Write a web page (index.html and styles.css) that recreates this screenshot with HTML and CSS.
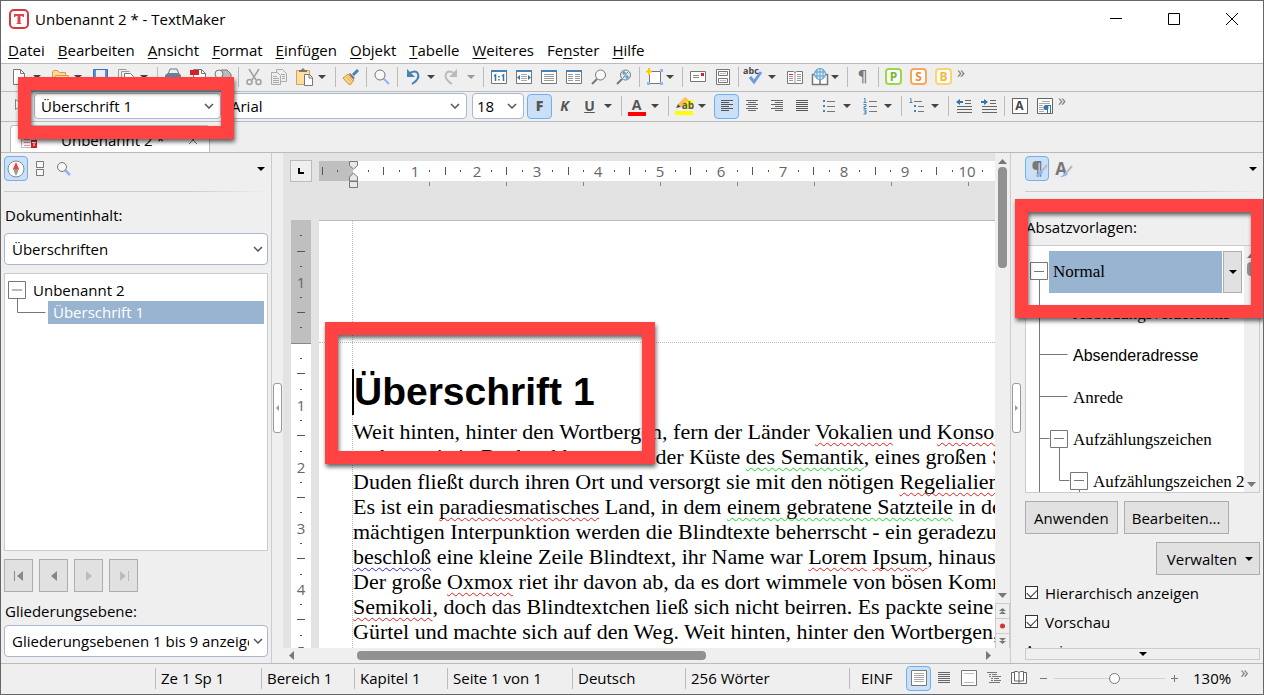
FILE: index.html
```html
<!DOCTYPE html>
<html lang="de">
<head>
  <meta charset="UTF-8">
  <meta name="viewport" content="width=device-width, initial-scale=1.0">
  <title>Unbenannt 2 * - TextMaker</title>
  <link rel="stylesheet" href="styles.css">
</head>
<body>
<header class="titlebar">
  <svg class="logo" width="20" height="20" viewBox="0 0 20 20"><rect x="1" y="1" width="18" height="18" rx="4" fill="#fff" stroke="#d9363e" stroke-width="2"/><path d="M5 5h10v3h-1l-1-1h-1.500v7l1.500 1h-6l1.500-1v-7h-1.500l-1 1h-1z" fill="#e0454c"/></svg>
  <span class="titlebar__name">Unbenannt 2 * - TextMaker</span>
  <button class="window-btn" aria-label="Minimieren"><svg width="14" height="14"><path d="M1 6.500h12" stroke="#000"/></svg></button>
  <button class="window-btn" aria-label="Maximieren"><svg width="14" height="14"><path d="M1.500 1.500h11v11h-11z" fill="none" stroke="#000"/></svg></button>
  <button class="window-btn" aria-label="Schließen"><svg width="14" height="14"><path d="M1 1l12 12M13 1l-12 12" stroke="#000"/></svg></button>
</header>

<nav class="menu">
  <a href="#"><u>D</u>atei</a>
  <a href="#"><u>B</u>earbeiten</a>
  <a href="#"><u>A</u>nsicht</a>
  <a href="#"><u>F</u>ormat</a>
  <a href="#"><u>E</u>infügen</a>
  <a href="#"><u>O</u>bjekt</a>
  <a href="#"><u>T</u>abelle</a>
  <a href="#"><u>W</u>eiteres</a>
  <a href="#">Fe<u>n</u>ster</a>
  <a href="#"><u>H</u>ilfe</a>
</nav>

<div class="toolbar toolbar--main">
  <button class="tool" aria-label="Neu"><svg width="18" height="18"><path d="M3.500 1.500h7l4 4v11h-11z" fill="#fff" stroke="#777"/><path d="M10.500 1.500v4h4" fill="none" stroke="#777"/></svg></button>
  <button class="drop" aria-label="Neu Optionen"></button>
  <button class="tool" aria-label="Öffnen"><svg width="18" height="18"><path d="M1.500 15.500v-12l1-1h4l2 2h6v3" fill="#fbd79a" stroke="#d79d47"/><path d="M1.500 15.500l3-8h13l-3 8z" fill="#ffe0ac" stroke="#d79d47"/></svg></button>
  <button class="drop" aria-label="Öffnen Optionen"></button>
  <button class="tool" aria-label="Speichern"><svg width="18" height="18"><path d="M1.500 1.500h14v15h-14z" fill="#5b8fd8" stroke="#3c6fb5"/><path d="M4 2h9v7h-9zM5 12h7v4h-7z" fill="#eee"/></svg></button>
  <button class="tool" aria-label="Alles speichern"><svg width="18" height="18"><path d="M1.500 12.500v-11h8M4.500 14.500v-11h8" fill="none" stroke="#999"/><path d="M7.500 5.500h6l3 3v8h-9z" fill="#fff" stroke="#777"/><path d="M10 10h5v4h-5z" fill="#4682b4"/></svg></button>
  <button class="drop" aria-label="Speichern Optionen"></button>
  <span class="sep"></span>
  <button class="tool" aria-label="Drucken"><svg width="18" height="18"><path d="M4 6l2-5h7l2 5z" fill="#eee" stroke="#777"/><path d="M1 7l3-2h10l3 2v6h-16z" fill="#6f7f8f"/><path d="M3 7h10v2h-10z" fill="#4e8ab8"/><path d="M13 9h3v2h-3z" fill="#a3d52b"/></svg></button>
  <button class="tool" aria-label="PDF"><svg width="18" height="18"><path d="M4.500 1.500h8l4 4v11h-12z" fill="#fff" stroke="#777"/><path d="M1 2h9v5h-9z" fill="#d5202a"/><path d="M12.500 1.500v4h4" fill="none" stroke="#777"/></svg></button>
  <button class="tool" aria-label="Seitenansicht"><svg width="18" height="18"><path d="M7 2h6l4 4v8h-9z" fill="#bbb" stroke="#777"/><circle cx="5" cy="6" r="4" fill="#eee" stroke="#777"/><path d="M14 9h3v3h-3z" fill="#a3d52b"/></svg></button>
  <span class="sep"></span>
  <button class="tool" aria-label="Ausschneiden"><svg width="18" height="18" fill="none" stroke="#a0a0a0" stroke-width="1.500"><path d="M4 1l7 11M14 1l-7 11"/><circle cx="4.500" cy="14" r="2.500"/><circle cx="13.500" cy="14" r="2.500"/></svg></button>
  <button class="tool" aria-label="Kopieren"><svg width="18" height="18" fill="#eee" stroke="#aaa"><path d="M6.500 1.500h6l4 4v8h-10z"/><path d="M1.500 4.500h6l3 3v9h-9zM3 8.500h4M3 10.500h6M3 12.500h6M3 14.500h6M11 6.500h4M12 8.500h3M12 10.500h3"/></svg></button>
  <button class="tool" aria-label="Einfügen"><svg width="18" height="18"><path d="M1.500 2.500h13v14h-13z" fill="#ffdfa0" stroke="#d7a052"/><path d="M4 4h8v-2h-2l-2-2-2 2h-2z" fill="#777"/><path d="M9.500 6.500h5l3 3v8h-8z" fill="#fff" stroke="#777"/><path d="M14 7v3h3" fill="none" stroke="#777"/></svg></button>
  <button class="drop" aria-label="Einfügen Optionen"></button>
  <span class="sep"></span>
  <button class="tool" aria-label="Format übertragen"><svg width="18" height="18"><path d="M16 2l-5 5" stroke="#4682b4" stroke-width="3"/><path d="M8 5l5 5-2 1-4-5z" fill="#777"/><path d="M6 6l6 6-4 5q-4-3-7-7z" fill="#ffd28a" stroke="#c89043"/><path d="M4 9l5 5M6 8l5 5" stroke="#e0b060"/></svg></button>
  <span class="sep"></span>
  <button class="tool" aria-label="Suchen"><svg width="18" height="18"><path d="M10 10l6 6" stroke="#8fb3ff" stroke-width="2"/><circle cx="7" cy="7" r="5" fill="#f8f8f8" stroke="#777"/></svg></button>
  <span class="sep"></span>
  <button class="tool" aria-label="Rückgängig"><svg width="18" height="18"><path d="M4 6q8-5 10 0t-6 10" fill="none" stroke="#4682b4" stroke-width="2"/><path d="M3 1v8h8z" fill="#4682b4"/></svg></button>
  <button class="drop drop--narrow" aria-label="Rückgängig Liste"></button>
  <button class="tool" aria-label="Wiederherstellen"><svg width="18" height="18"><path d="M12 6q-8-5-10 0t6 10" fill="none" stroke="#bbb" stroke-width="2"/><path d="M13 1v8h-8z" fill="#bbb"/></svg></button>
  <button class="drop drop--narrow drop--off" aria-label="Wiederherstellen Liste"></button>
  <span class="sep"></span>
  <button class="tool" aria-label="Originalgröße"><svg width="18" height="18"><path d="M1.500 2.500h15v13h-15z" fill="#fff" stroke="#777"/><path d="M1 2h16v2h-16z" fill="#4682b4"/><path d="M4 8l1.500-1v6M12 8l1.500-1v6M9 8v1.500M9 11v1.500" fill="none" stroke="#2f75ab" stroke-width="1.500"/></svg></button>
  <button class="tool" aria-label="Seitenbreite"><svg width="18" height="18"><path d="M1.500 2.500h15v13h-15z" fill="#fff" stroke="#777"/><path d="M1 2h16v2h-16z" fill="#4682b4"/><path d="M6 6.500h6M6 8.500h6M6 10.500h6M6 12.500h6" stroke="#aaa"/><path d="M5 7v5l-3-2.500zM13 7v5l3-2.500z" fill="#2f75ab"/></svg></button>
  <button class="tool" aria-label="Ganze Seite"><svg width="18" height="18"><path d="M1.500 2.500h15v13h-15z" fill="#fff" stroke="#777"/><path d="M1 2h16v2h-16z" fill="#4682b4"/><path d="M4 6.500h10M4 8.500h10M4 10.500h10M4 12.500h10" stroke="#999"/></svg></button>
  <button class="tool" aria-label="Zwei Seiten"><svg width="18" height="18"><path d="M1.500 2.500h15v13h-15z" fill="#fff" stroke="#777"/><path d="M1 2h16v2h-16z" fill="#4682b4"/><path d="M3 6.500h5M3 8.500h5M3 10.500h5M3 12.500h5M10 6.500h5M10 8.500h5M10 10.500h5M10 12.500h5" stroke="#999"/></svg></button>
  <button class="tool" aria-label="Lupe"><svg width="18" height="18"><path d="M7 11l-5 5" stroke="#777" stroke-width="2"/><circle cx="10.500" cy="7" r="5" fill="#f8f8f8" stroke="#777"/></svg></button>
  <button class="tool" aria-label="Zoomstufe"><svg width="18" height="18"><path d="M7 11l-5 5" stroke="#777" stroke-width="2"/><circle cx="10.500" cy="7" r="5" fill="#e4f0f8" stroke="#777"/><path d="M8 10l5-6M8 4h2v2h-2zM11 8h2v2h-2z" stroke="#4682b4" fill="none"/></svg></button>
  <span class="sep"></span>
  <button class="tool" aria-label="Rahmen"><svg width="18" height="18"><path d="M3.500 3.500h11v12h-11z" fill="#fff" stroke="#777"/><path d="M1 14h3v3h-3zM14 14h3v3h-3zM14 1h3v3h-3z" fill="#8fb3ff"/><path d="M3 0v7M0 3.500h6" stroke="#fc0" stroke-width="2"/></svg></button>
  <button class="drop drop--near" aria-label="Rahmen Optionen"></button>
  <span class="sep"></span>
  <button class="tool" aria-label="Umschlag"><svg width="18" height="18"><path d="M1.500 3.500h15v10h-15z" fill="#fff" stroke="#777"/><path d="M12 5h3v3h-3z" fill="#d5202a"/><path d="M4 7.500h6M4 9.500h6" stroke="#888"/></svg></button>
  <button class="tool" aria-label="Etiketten"><svg width="18" height="18" fill="#fff" stroke="#777"><path d="M2.500 1.500h13v15h-13z"/><path d="M4.500 3.500h9v4h-9zM4.500 10.500h9v4h-9z"/><path d="M6 5.500h6M6 12.500h6" stroke="#bbb"/></svg></button>
  <span class="sep"></span>
  <button class="tool tool--spell" aria-label="Rechtschreibung"><small>abc</small><svg width="18" height="18"><path d="M5 9l4 5 7-10" fill="none" stroke="#6f9be0" stroke-width="3"/></svg></button>
  <button class="drop" aria-label="Rechtschreibung Optionen"></button>
  <button class="tool" aria-label="Thesaurus"><svg width="18" height="18"><path d="M1.500 3.500h6l1.500 1 1.500-1h6v12h-15z" fill="#fff" stroke="#777"/><path d="M9 4v12M11 6.500h4M3 8.500h4M11 8.500h4M3 10.500h4M11 10.500h4M3 12.500h4M11 12.500h4" stroke="#999"/><path d="M3 6.500h4" stroke="#d5202a"/></svg></button>
  <button class="tool" aria-label="Wörterbuch"><svg width="18" height="18"><path d="M1.500 6.500h15v10h-15zM9 8v9" fill="#fff" stroke="#777" stroke-width="1.500"/><circle cx="9" cy="6" r="5.500" fill="#d9ecf8" stroke="#5f9fcc"/><path d="M4 4h10M4 8h10M9 1v10M6 1v10M12 1v10" stroke="#5f9fcc"/></svg></button>
  <button class="drop drop--near" aria-label="Wörterbuch Optionen"></button>
  <span class="sep"></span>
  <button class="tool tool--pilcrow" aria-label="Steuerzeichen">¶</button>
  <span class="sep"></span>
  <button class="tool"><span class="badge badge--p">P</span></button>
  <button class="tool"><span class="badge badge--s">S</span></button>
  <button class="tool"><span class="badge badge--b">B</span></button>
  <button class="more" aria-label="Mehr">»</button>
</div>

<div class="toolbar toolbar--format">
  <button class="tool" aria-label="Zeiger"><svg width="18" height="18"><path d="M6.500 2.500v10l7-5z" fill="#fff" stroke="#888"/></svg></button>
  <span class="select select--style">
    <select aria-label="Absatzvorlage"><option>Überschrift 1</option></select>
    <svg width="10" height="6"><path d="M1 1l4 4 4-4"/></svg>
  </span>
  <span class="select select--font">
    <select aria-label="Schriftart"><option>Arial</option></select>
    <svg width="10" height="6"><path d="M1 1l4 4 4-4"/></svg>
  </span>
  <span class="select select--size">
    <select aria-label="Schriftgröße"><option>18</option></select>
    <svg width="10" height="6"><path d="M1 1l4 4 4-4"/></svg>
  </span>
  <button class="tool tool--on tool--text"><b>F</b></button>
  <button class="tool tool--text"><i>K</i></button>
  <button class="tool tool--text"><u>U</u></button>
  <button class="drop" aria-label="Unterstreichung"></button>
  <span class="sep"></span>
  <button class="tool tool--text"><span class="font-color">A</span></button>
  <button class="drop" aria-label="Schriftfarbe"></button>
  <span class="sep"></span>
  <button class="tool tool--marker" aria-label="Hervorheben"><svg width="18" height="20"><path d="M8 4h10v9h-10zM0 15h18v4h-18z" fill="#ff0"/><path d="M3 8l7-7 4 3-7 7z" fill="#ffc04d"/><path d="M3 8l3 3-5 1z" fill="#555"/></svg><small>ab</small></button>
  <button class="drop" aria-label="Markierfarbe"></button>
  <div class="align">
    <button class="tool tool--on" aria-label="Linksbündig"><svg width="14" height="14" stroke="#555"><path d="M1 1.500h12M1 3.500h8M1 5.500h12M1 7.500h8M1 9.500h12M1 11.500h8"/></svg></button>
    <button class="tool" aria-label="Zentriert"><svg width="14" height="14" stroke="#666"><path d="M1 1.500h12M3 3.500h8M1 5.500h12M3 7.500h8M1 9.500h12M3 11.500h8"/></svg></button>
    <button class="tool" aria-label="Rechtsbündig"><svg width="14" height="14" stroke="#666"><path d="M1 1.500h12M5 3.500h8M1 5.500h12M5 7.500h8M1 9.500h12M5 11.500h8"/></svg></button>
    <button class="tool" aria-label="Blocksatz"><svg width="14" height="14" stroke="#555"><path d="M1 1.500h12M1 3.500h12M1 5.500h12M1 7.500h12M1 9.500h12M1 11.500h12"/></svg></button>
  </div>
  <button class="tool" aria-label="Aufzählung"><svg width="14" height="16"><path d="M1 2h2v2h-2zM1 7h2v2h-2zM1 12h2v2h-2z" fill="#4682b4"/><path d="M5 3.500h8M5 8.500h8M5 13.500h8" stroke="#777"/></svg></button>
  <button class="drop" aria-label="Aufzählung Optionen"></button>
  <button class="tool" aria-label="Nummerierung"><svg width="14" height="18"><path d="M1 1.500h1v4M.5 5.500h3M.5 7.500h2.500v2h-2v2h2.500M.5 13h2.500v4h-2.500M1 15h2" fill="none" stroke="#4682b4"/><path d="M6 4.500h8M6 9.500h8M6 14.500h8" stroke="#777"/></svg></button>
  <button class="drop" aria-label="Nummerierung Optionen"></button>
  <span class="sep"></span>
  <button class="tool" aria-label="Gliederung"><svg width="16" height="18"><path d="M1 1.500h1v4M.5 5.500h3" fill="none" stroke="#4682b4"/><path d="M5 8h2v2h-2zM5 13h2v2h-2z" fill="#4682b4"/><path d="M5 4.500h8M9 9.500h6M9 14.500h6" stroke="#777"/></svg></button>
  <button class="drop" aria-label="Gliederung Optionen"></button>
  <span class="sep"></span>
  <button class="tool" aria-label="Einzug verkleinern"><svg width="16" height="16"><path d="M9 2.500h6M9 5.500h6M1 8.500h15M1 11.500h15M1 14.500h15" stroke="#666"/><path d="M0 4l4-3v2h3v2h-3v2z" fill="#2f75ab"/></svg></button>
  <button class="tool" aria-label="Einzug vergrößern"><svg width="16" height="16"><path d="M9 2.500h6M9 5.500h6M1 8.500h15M1 11.500h15M1 14.500h15" stroke="#666"/><path d="M7 4l-4-3v2h-3v2h3v2z" fill="#2f75ab"/></svg></button>
  <span class="sep"></span>
  <button class="tool"><span class="boxed">A</span></button>
  <button class="tool" aria-label="Absatz"><svg width="16" height="16"><path d="M.5.5h15v15h-15z" fill="#fff" stroke="#666"/><path d="M5 3.500h8M2 5.500h11M2 7.500h4M2 9.500h4M2 11.500h5M2 13.500h5" stroke="#aaa"/><path d="M14 7.500h-4M10.500 8v7M13.500 8v7" fill="none" stroke="#2f75ab"/><circle cx="9" cy="9.500" r="2.500" fill="#2f75ab"/></svg></button>
  <button class="more" aria-label="Mehr">»</button>
</div>

<div class="tabs">
  <div class="tab">
    <svg width="18" height="18"><path d="M1.500 1.500h10l4 4v11h-14z" fill="#fff" stroke="#bbb"/><path d="M4 8.500h6M4 11.500h6M4 14.500h6" stroke="#d9a0a0"/><path d="M11 9h6v8h-6z" fill="#d5202a"/><path d="M12 11.500h4M14 11v4" stroke="#fff"/></svg>
    <span class="tab__name">Unbenannt 2 *</span>
    <button class="tab__close" aria-label="Tab schließen"><svg width="10" height="10"><path d="M1 1l8 8M9 1l-8 8" stroke="#777"/></svg></button>
  </div>
</div>

<main class="work">
  <aside class="panel panel--left">
    <div class="panel__tools">
      <button class="tool tool--on" aria-label="Navigator"><svg width="20" height="20"><circle cx="10" cy="10" r="8" fill="#fff" stroke="#888"/><path d="M10 3l3 7h-6z" fill="#f04040"/><path d="M10 17l3-7h-6z" fill="#999"/></svg></button>
      <button class="tool" aria-label="Seiten"><svg width="10" height="18" fill="#f8f8f8" stroke="#777"><path d="M1.500 1.500h7v6h-7zM1.500 9.500h7v6h-7z"/></svg></button>
      <button class="tool" aria-label="Suche"><svg width="16" height="16"><path d="M9 9l5 5" stroke="#8fb3ff" stroke-width="2.500"/><circle cx="6" cy="6" r="4.500" fill="#f8f8f8" stroke="#777"/></svg></button>
      <button class="drop drop--panel" aria-label="Optionen"></button>
    </div>
    <label class="panel__label" for="content">Dokumentinhalt:</label>
    <span class="select select--tall">
      <select id="content"><option>Überschriften</option></select>
      <svg width="10" height="6"><path d="M1 1l4 4 4-4"/></svg>
    </span>
    <ul class="outline">
      <li><svg width="20" height="24"><path d="M.5 3.500h17v17h-17z" fill="#fff" stroke="#777"/><path d="M4 12h10M9.500 21v3" stroke="#777"/></svg><span>Unbenannt 2</span></li>
      <li class="outline__child"><svg width="38" height="24"><path d="M9.500 0v11.500h28" fill="none" stroke="#777"/></svg><span class="selected">Überschrift 1</span></li>
    </ul>
    <div class="steps">
      <button aria-label="Anfang"><svg width="12" height="12"><path d="M1.500 1v10" stroke="#888"/><path d="M10 1v10l-6-5z" fill="#888"/></svg></button>
      <button aria-label="Zurück"><svg width="12" height="12"><path d="M9 1v10l-6-5z" fill="#888"/></svg></button>
      <button aria-label="Weiter" disabled><svg width="12" height="12"><path d="M3 1v10l6-5z" fill="#bbb"/></svg></button>
      <button aria-label="Ende" disabled><svg width="12" height="12"><path d="M10.500 1v10" stroke="#bbb"/><path d="M2 1v10l6-5z" fill="#bbb"/></svg></button>
    </div>
    <label class="panel__label panel__label--level" for="level">Gliederungsebene:</label>
    <span class="select select--tall">
      <select id="level"><option>Gliederungsebenen 1 bis 9 anzeigen</option></select>
      <svg width="10" height="6"><path d="M1 1l4 4 4-4"/></svg>
    </span>
  </aside>

  <div class="splitter splitter--left"><button aria-label="Leiste einklappen"><svg width="5" height="8"><path d="M4 1v6l-3-3z" fill="#999"/></svg></button></div>

  <section class="editor">
    <div class="corner"><button aria-label="Tabulator"><svg width="8" height="8"><path d="M2 1v5h5" fill="none" stroke="#000" stroke-width="2"/></svg></button></div>
    <div class="ruler-x">
      <svg width="100%" height="28">
        <rect width="100%" height="20" fill="#fff"/>
        <rect width="34" height="20" fill="#bfbfbf"/>
        <path d="M3.500 6v8M64.500 6v8M126.500 6v8M187.500 6v8M249.500 6v8M310.500 6v8M371.500 6v8M433.500 6v8M494.500 6v8M556.500 6v8M617.500 6v8M18.500 9v2M49.500 9v2M80.500 9v2M110.500 9v2M141.500 9v2M172.500 9v2M203.500 9v2M233.500 9v2M264.500 9v2M295.500 9v2M326.500 9v2M356.500 9v2M387.500 9v2M418.500 9v2M449.500 9v2M479.500 9v2M510.500 9v2M540.500 9v2M571.500 9v2M602.500 9v2M633.500 9v2M663.500 9v2" stroke="#555"/>
        <path d="M110.500 21v4M187.500 21v4M264.500 21v4M341.500 21v4M418.500 21v4M495.500 21v4M572.500 21v4M649.500 21v4" stroke="#888"/>
        <path d="M30.500.5h8v4l-4 3.500-4-3.500zM34.500 12l4 4v4h-8v-4zM30.500 20.500h8v6h-8z" fill="#e8e8e8" stroke="#777"/>
        <g class="numbers"><text x="96" y="16">1</text><text x="158" y="16">2</text><text x="218" y="16">3</text><text x="279" y="16">4</text><text x="341" y="16">5</text><text x="402" y="16">6</text><text x="464" y="16">7</text><text x="525" y="16">8</text><text x="586" y="16">9</text><text x="648" y="16">10</text></g>
      </svg>
    </div>
    <div class="scroll-y">
      <svg width="9" height="6"><path d="M0 6h9l-4.500-5z" fill="#777"/></svg>
      <div class="scroll-y__thumb"></div>
      <svg width="9" height="6"><path d="M0 0h9l-4.500 5z" fill="#777"/></svg>
      <button aria-label="Vorige Seite"><svg width="7" height="8"><path d="M0 4l3.500-3 3.500 3zM0 7l3.500-3 3.500 3z" fill="#777"/></svg></button>
      <button aria-label="Objekt"><svg width="7" height="8"><circle cx="3.500" cy="4" r="2.500" fill="#d93030"/></svg></button>
      <button aria-label="Nächste Seite"><svg width="7" height="8"><path d="M0 1l3.500 3 3.500-3zM0 4l3.500 3 3.500-3z" fill="#777"/></svg></button>
    </div>
    <div class="ruler-y">
      <svg width="20" height="600">
        <rect width="20" height="600" fill="#fff"/>
        <rect width="20" height="123" fill="#bfbfbf"/>
        <path d="M0 123.500h20" stroke="#888"/>
        <path d="M6 31.500h8M6 92.500h8M6 153.500h8M6 215.500h8M6 277.500h8M6 338.500h8M6 399.500h8M9 15.500h2M9 46.500h2M9 77.500h2M9 107.500h2M9 138.500h2M9 169.500h2M9 200.500h2M9 231.500h2M9 262.500h2M9 292.500h2M9 323.500h2M9 354.500h2M9 384.500h2M9 415.500h2" stroke="#555"/>
        <g class="numbers"><text x="10" y="68">1</text><text x="10" y="191">1</text><text x="10" y="253">2</text><text x="10" y="314">3</text><text x="10" y="375">4</text><text x="10" y="437">5</text></g>
      </svg>
    </div>
    <article class="page">
      <h1>Überschrift 1</h1>
      <p>Weit hinten, hinter den Wortbergen, fern der Länder <span class="typo">Vokalien</span> und <span class="typo">Konsonantien</span> leben<br>
        wohnen sie in Buchstabhausen an der Küste <span class="grammar">des Semantik</span>, eines großen Sprachozeans<br>
        Duden fließt durch ihren Ort und versorgt sie mit den nötigen <span class="typo">Regelialien</span>.<br>
        Es ist ein <span class="typo">paradiesmatisches</span> Land, in dem <span class="grammar">einem gebratene Satzteile</span> in den Mund<br>
        mächtigen Interpunktion werden die Blindtexte beherrscht - ein geradezu <span class="typo">unorthographisches</span><br>
        <span class="style-hint">beschloß</span> eine kleine Zeile Blindtext, ihr Name war <span class="typo">Lorem</span> <span class="typo">Ipsum</span>, hinaus zu gehen<br>
        Der große <span class="typo">Oxmox</span> riet ihr davon ab, da es dort wimmele von bösen Kommata<br>
        <span class="typo">Semikoli</span>, doch das Blindtextchen ließ sich nicht beirren. Es packte seine sieben<br>
        Gürtel und machte sich auf den Weg. Weit hinten, hinter den Wortbergen,</p>
    </article>
    <div class="scroll-x">
      <svg width="6" height="9"><path d="M5 0v9l-5-4.500z" fill="#777"/></svg>
      <div class="scroll-x__thumb"></div>
      <svg width="6" height="9"><path d="M0 0v9l5-4.500z" fill="#777"/></svg>
    </div>
  </section>

  <div class="splitter splitter--right"><button aria-label="Leiste einklappen"><svg width="5" height="8"><path d="M1 1v6l3-3z" fill="#999"/></svg></button></div>

  <aside class="panel panel--right">
    <div class="panel__tools">
      <button class="tool tool--on" aria-label="Absatzvorlagen"><span class="style-mark">¶</span><svg width="14" height="14"><path d="M13 2l-5 6" stroke="#bbb" stroke-width="2"/><path d="M7 7l2 3q-4 4-8 3 3-1 6-6z" fill="#8fb3ff"/></svg></button>
      <button class="tool" aria-label="Zeichenvorlagen"><span class="style-mark">A</span><svg width="14" height="14"><path d="M13 2l-5 6" stroke="#bbb" stroke-width="2"/><path d="M7 7l2 3q-4 4-8 3 3-1 6-6z" fill="#8fb3ff"/></svg></button>
      <button class="drop drop--panel" aria-label="Optionen"></button>
    </div>
    <span class="panel__label panel__label--styles">Absatzvorlagen:</span>
    <div class="styles">
      <ul class="styles__list">
        <li class="styles__current"><svg width="20" height="42"><path d="M1.500 11.500h17v17h-17z" fill="#fff" stroke="#777"/><path d="M5 20.500h10M10.500 29v13" stroke="#777"/></svg><span class="styles__name">Normal</span><button class="styles__drop" aria-label="Vorlage Optionen"><span class="drop"></span></button></li>
        <li><svg width="44" height="42"><path d="M10.500 0v42M10.500 19.500h28" stroke="#777"/></svg>Abbildungsverzeichnis</li>
        <li class="sans"><svg width="44" height="42"><path d="M10.500 0v42M10.500 19.500h28" stroke="#777"/></svg>Absenderadresse</li>
        <li><svg width="44" height="42"><path d="M10.500 0v42M10.500 19.500h28" stroke="#777"/></svg>Anrede</li>
        <li><svg width="44" height="42"><path d="M10.500 0v42M10.500 19.500h10M30.500 28v14" stroke="#777"/><path d="M21.500 11.500h17v17h-17z" fill="#fff" stroke="#777"/><path d="M25 19.500h10" stroke="#777"/></svg>Aufzählungszeichen</li>
        <li><svg width="64" height="42"><path d="M10.500 0v42M30.500 0v19.500h10M50.500 28v14" fill="none" stroke="#777"/><path d="M41.500 11.500h17v17h-17z" fill="#fff" stroke="#777"/><path d="M45 19.500h10" stroke="#777"/></svg>Aufzählungszeichen 2</li>
      </ul>
      <div class="styles__scroll">
        <svg width="9" height="6"><path d="M0 6h9l-4.500-5z" fill="#777"/></svg>
        <div class="styles__thumb"></div>
        <svg width="9" height="6"><path d="M0 0h9l-4.500 5z" fill="#777"/></svg>
      </div>
    </div>
    <div class="actions">
      <button class="btn">Anwenden</button>
      <button class="btn">Bearbeiten...</button>
      <button class="btn btn--manage">Verwalten <span class="drop"></span></button>
    </div>
    <label class="check"><input type="checkbox" checked>Hierarchisch anzeigen</label>
    <label class="check"><input type="checkbox" checked>Vorschau</label>
    <div class="clipped">Anzeigen:</div>
    <button class="expand" aria-label="Mehr anzeigen"><span class="drop"></span></button>
  </aside>
</main>

<footer class="status">
  <span class="status__cell status__cell--empty"></span>
  <span class="status__cell status__cell--line">Ze 1 Sp 1</span>
  <span class="status__cell status__cell--area">Bereich 1</span>
  <span class="status__cell status__cell--area">Kapitel 1</span>
  <span class="status__cell status__cell--page">Seite 1 von 1</span>
  <span class="status__cell status__cell--lang">Deutsch</span>
  <span class="status__cell status__cell--words">256 Wörter</span>
  <span class="status__cell status__cell--mode">EINF</span>
  <button class="tool tool--on" aria-label="Standard"><svg width="16" height="16"><path d="M.5.5h15v15h-15z" fill="#fff" stroke="#777"/><path d="M3 3.500h10M3 5.500h10M3 7.500h10M3 9.500h10M3 11.500h10" stroke="#aaa"/></svg></button>
  <button class="tool" aria-label="Fortlaufend"><svg width="14" height="14" stroke="#666"><path d="M1 1.500h12M1 3.500h12M1 5.500h12M1 7.500h12M1 9.500h12M1 11.500h12"/></svg></button>
  <button class="tool" aria-label="Masterseite"><svg width="16" height="16"><path d="M.5.5h15v15h-15z" fill="#fff" stroke="#777"/><path d="M3 3.500h10M3 12.500h10" stroke="#bbb"/></svg></button>
  <button class="tool" aria-label="Gliederung"><svg width="14" height="14" stroke="#777"><path d="M0 1.500h10M2 3.500h2M5 3.500h5M2 5.500h2M5 5.500h9M4 7.500h2M7 7.500h5M4 9.500h2M7 9.500h7M2 11.500h11"/></svg></button>
  <button class="tool" aria-label="Buch"><svg width="18" height="16"><path d="M1.500 2.500h3v-1h3l1.500 1 1.500-1h3v1h3v11h-15z" fill="#fff" stroke="#666"/><path d="M4.500 2v9h9v-9M9 2v11" fill="none" stroke="#666"/></svg></button>
  <button class="tool" aria-label="Verkleinern"><svg width="9" height="9"><path d="M1 4.500h7" stroke="#777"/></svg></button>
  <input class="zoom" type="range" min="0" max="100" value="55" aria-label="Zoom">
  <button class="tool tool--plus" aria-label="Vergrößern"><svg width="9" height="9"><path d="M1 4.500h7M4.500 1v7" stroke="#777"/></svg></button>
  <span class="status__zoom">130%</span>
  <button class="more" aria-label="Mehr">»</button>
</footer>

<div class="frame frame--style"></div>
<div class="frame frame--heading"></div>
<div class="frame frame--styles"></div>
</body>
</html>
```
FILE: styles.css
```css
* {
  box-sizing: border-box;
}

body {
  position: relative;
  display: flex;
  flex-direction: column;
  height: 100vh;
  margin: 0;
  border: 1px solid #666;
  overflow: hidden;
  background: #efefef;
  color: #000;
  font-family: "Open Sans", "Noto Sans", sans-serif;
  font-size: 15px;
  line-height: 20px;
  white-space: nowrap;
}

button {
  display: flex;
  flex: none;
  align-items: center;
  justify-content: center;
  border: 0;
  padding: 0;
  background: none;
  color: inherit;
  font: inherit;
}

ul {
  list-style: none;
  margin: 0;
  padding: 0;
}

svg {
  display: block;
  flex: none;
}

/* title and menu */

.titlebar {
  display: flex;
  flex: none;
  align-items: center;
  height: 36px;
  padding: 0 2px 0 8px;
  background: #fff;
}

.titlebar__name {
  flex: 1;
  padding-left: 6px;
}

.window-btn {
  width: 58px;
  height: 36px;
}

.menu {
  display: flex;
  flex: none;
  gap: 13px;
  height: 26px;
  padding: 3px 7px;
  background: #fff;
}

.menu a {
  color: #000;
  text-decoration: none;
}

.menu u {
  text-underline-offset: 2px;
}

/* toolbars */

.toolbar {
  display: flex;
  flex: none;
  align-items: center;
  border-top: 1px solid #bbb;
}

.toolbar--main {
  height: 28px;
  padding: 0 0 2px 5px;
}

.toolbar--format {
  height: 30px;
  padding: 0 0 1px 4px;
}

.tool {
  position: relative;
  width: 25px;
  height: 25px;
  border-radius: 4px;
}

.tool--on {
  border: 1px solid #6cb0f5;
  background: #cbe0f6;
}

.tool--text {
  color: #555;
  font-size: 14px;
  font-weight: bold;
}

.tool--pilcrow {
  color: #777;
  font-family: "DejaVu Sans", sans-serif;
  font-size: 16px;
}

.tool--spell small {
  position: absolute;
  top: 2px;
  left: 2px;
  color: #444;
  font-size: 9px;
  font-weight: bold;
  line-height: 10px;
}

.tool--marker small {
  position: absolute;
  top: 6px;
  right: 2px;
  color: #555;
  font-size: 10px;
  font-weight: bold;
  line-height: 10px;
}

.drop {
  display: flex;
  flex: none;
  width: 12px;
  height: 20px;
  margin-right: 4px;
  align-items: center;
  justify-content: center;
  color: #444;
}

.drop::before {
  content: "";
  border: 4px solid transparent;
  border-top-color: currentColor;
  border-bottom: 0;
}

.drop--narrow {
  margin-right: 3px;
}

.drop--near {
  margin: 0 3px 0 -3px;
}

.drop--off {
  color: #999;
}

.sep {
  flex: none;
  width: 1px;
  height: 20px;
  margin: 0 2px 0 3px;
  background: #bbb;
}

.more {
  align-self: flex-start;
  margin-left: 1px;
  color: #777;
  font-size: 16px;
  line-height: 16px;
}

.align {
  display: flex;
  margin: 0 2px;
}

.badge {
  width: 17px;
  height: 17px;
  border: 2px solid;
  border-radius: 4px;
  background: #fff;
  font-size: 12px;
  font-weight: bold;
  line-height: 13px;
}

.badge--p {
  border-color: #9bd64b;
  color: #7cb82f;
}

.badge--s {
  border-color: #fba65f;
  color: #f58a3c;
}

.badge--b {
  border-color: #ffd36a;
  color: #f0b840;
}

.font-color {
  width: 18px;
  border-bottom: 4px solid #f00;
  line-height: 15px;
}

.boxed {
  width: 16px;
  height: 16px;
  border: 1px solid #666;
  background: #fff;
  color: #444;
  font-size: 12px;
  font-weight: bold;
  line-height: 14px;
}

.select {
  display: grid;
  flex: none;
  grid-template-columns: 1fr 16px;
  align-items: center;
  height: 26px;
  border: 1px solid #a9b8d0;
  border-radius: 4px;
  background: #fff;
}

.select select {
  grid-area: 1 / 1 / 2 / 3;
  width: 100%;
  height: 100%;
  border: 0;
  padding: 0 18px 0 6px;
  appearance: none;
  background: none;
  color: #000;
  font: inherit;
}

.select svg {
  grid-area: 1 / 2;
  fill: none;
  pointer-events: none;
  stroke: #555;
  stroke-width: 1.5;
}

.select--style {
  width: 187px;
  margin: 0 5px 0 4px;
}

.select--font {
  width: 241px;
  margin-right: 5px;
}

.select--size {
  width: 52px;
  margin-right: 3px;
}

.select--font select,
.select--size select {
  padding-left: 4px;
}

.select--tall {
  grid-template-columns: 1fr 14px;
  height: 32px;
}

.select--tall select {
  padding-left: 7px;
}

/* document tabs */

.tabs {
  display: flex;
  flex: none;
  align-items: flex-end;
  height: 32px;
  padding-left: 9px;
  border-top: 1px solid #bbb;
  border-bottom: 1px solid #bbb;
}

.tab {
  display: flex;
  align-items: center;
  width: 200px;
  height: 27px;
  padding: 2px 11px 0 9px;
  border: 1px solid #bbb;
  border-bottom: 0;
  border-radius: 4px 4px 0 0;
  background: #fff;
}

.tab__name {
  flex: 1;
  padding-left: 23px;
}

/* work area */

.work {
  display: flex;
  flex: 1;
  min-height: 0;
}

.panel {
  display: flex;
  flex: none;
  flex-direction: column;
  min-height: 0;
  padding: 3px;
}

.panel--left {
  width: 271px;
  padding-bottom: 6px;
  border-right: 1px solid #ccc;
}

.panel--right {
  width: 241px;
}

.panel__tools {
  display: flex;
  flex: none;
  height: 36px;
  margin-bottom: 13px;
  border-bottom: 1px solid;
  border-image: linear-gradient(to right, #ccc 70%, transparent) 1;
}

.panel__tools .tool {
  width: 24px;
}

.drop--panel {
  margin: 3px 1px 0 auto;
  color: #000;
}

.panel__label {
  margin: 0 1px 8px;
}

.panel__label--level {
  margin: 9px 1px 4px;
}

.panel__label--styles {
  margin: 12px 1px 8px;
}

.style-mark {
  color: #777;
  font-size: 17px;
  font-weight: bold;
}

.style-mark + svg {
  position: absolute;
  right: 0;
  bottom: 3px;
}

.outline {
  flex: 1;
  margin: 8px 0;
  padding: 4px 3px;
  border: 1px solid #ccc;
  background: #fff;
}

.outline li {
  display: flex;
  align-items: center;
  height: 23px;
}

.outline span {
  padding-left: 5px;
}

.outline .selected {
  flex: 1;
  margin-left: 2px;
  background: #99b4d1;
  color: #fff;
  line-height: 23px;
}

.steps {
  display: flex;
  gap: 6px;
}

.steps button {
  width: 29px;
  height: 33px;
  border: 1px solid #adadad;
  background: #e1e1e1;
}

.splitter {
  display: flex;
  flex: none;
  align-items: center;
  width: 11px;
  padding: 0 1px;
}

.splitter button {
  width: 9px;
  height: 50px;
  border: 1px solid #999;
  border-radius: 3px;
  background: #fff;
}

.splitter--right {
  width: 12px;
  border-left: 1px solid #ccc;
}

/* editor */

.editor {
  display: grid;
  flex: 1;
  grid-template: 67px minmax(0, 1fr) 15px / 36px minmax(0, 1fr) 15px;
  min-width: 0;
  background: #e3e3e3;
}

.corner {
  padding: 7px;
}

.corner button {
  width: 22px;
  height: 22px;
  border: 1px solid #bbb;
  background: #efefef;
}

.ruler-x {
  padding-top: 8px;
  overflow: hidden;
}

.ruler-y {
  padding-left: 8px;
  overflow: hidden;
}

.numbers {
  fill: #666;
  font-size: 15px;
  text-anchor: middle;
}

.page {
  position: relative;
  padding: 148px 0 0 34px;
  border-top: 1px solid #bbb;
  overflow: hidden;
  background: #fff;
  font-family: "Liberation Serif", serif;
}

.page::before {
  content: "";
  position: absolute;
  top: 0;
  bottom: 0;
  left: 33px;
  border-left: 1px dotted #bbb;
}

.page::after {
  content: "";
  position: absolute;
  top: 121px;
  right: 0;
  left: 0;
  border-top: 1px dotted #bbb;
}

.page h1 {
  position: relative;
  margin: 0 0 4px;
  padding-left: 1px;
  font-family: "Liberation Sans", sans-serif;
  font-size: 39px;
  line-height: 46px;
}

/* text cursor */
.page h1::before {
  content: "";
  position: absolute;
  top: 0;
  bottom: 0;
  left: -1px;
  border-left: 2px solid #000;
}

.page p {
  margin: 0;
  font-size: 22px;
  line-height: 25px;
}

.typo,
.grammar,
.style-hint {
  text-decoration: underline wavy 1px #e02020;
  text-decoration-skip-ink: none;
  text-underline-offset: 3px;
}

.grammar {
  text-decoration-color: #10e020;
}

.style-hint {
  text-decoration-color: #2020e0;
}

.scroll-y {
  display: flex;
  flex-direction: column;
  grid-area: 1 / 3 / 3 / 4;
  align-items: center;
  padding-top: 5px;
  background: #efefef;
}

.scroll-y__thumb {
  width: 9px;
  height: 101px;
  margin: 3px 0 auto;
  border-radius: 4px;
  background: #919191;
}

.scroll-y button {
  width: 15px;
  height: 15px;
  border: 1px solid #ccc;
  border-bottom: 0;
}

.scroll-y svg + button {
  margin-top: 4px;
}

.scroll-x {
  display: flex;
  grid-area: 3 / 1 / 4 / 4;
  align-items: center;
  padding: 0 18px 0 6px;
  background: #efefef;
}

.scroll-x__thumb {
  width: 349px;
  height: 9px;
  margin: 0 auto 0 62px;
  border-radius: 4px;
  background: #919191;
}

/* paragraph styles */

.styles {
  display: flex;
  flex: 1;
  min-height: 0;
  border: 1px solid #ccc;
  overflow: hidden;
}

.styles__list {
  flex: 1;
  min-width: 0;
  padding: 5px 2px 0 3px;
  background: #fff;
  font-family: "Liberation Serif", serif;
  font-size: 17px;
}

.styles__list li {
  display: flex;
  align-items: center;
  height: 42px;
}

.styles__list .sans {
  font-family: "Liberation Sans", sans-serif;
  font-size: 16px;
}

.styles__name {
  flex: 1;
  padding-left: 4px;
  background: #99b4d1;
  line-height: 42px;
}

.styles__drop {
  width: 19px;
  height: 42px;
  margin-left: 1px;
  border: 1px solid #adadad;
  background: #e1e1e1;
}

.styles__drop .drop,
.expand .drop {
  margin: 0;
  color: #000;
}

.styles__scroll {
  display: flex;
  flex: none;
  flex-direction: column;
  align-items: center;
  width: 15px;
  padding: 6px 0 4px;
}

.styles__thumb {
  width: 9px;
  height: 14px;
  margin: 4px 0 auto;
  border-radius: 4px;
  background: #919191;
}

.actions {
  display: flex;
  flex: none;
  flex-wrap: wrap;
  gap: 8px 6px;
  margin: 8px 0 6px;
}

.btn {
  height: 33px;
  padding: 0 8px;
  border: 1px solid #adadad;
  background: #e1e1e1;
}

.btn + .btn {
  padding: 0 7px;
}

.actions .btn--manage {
  gap: 6px;
  margin-left: auto;
  padding: 0 4px 0 10px;
}

.btn--manage .drop {
  margin: 0;
  color: #000;
}

.check {
  display: flex;
  flex: none;
  align-items: center;
  height: 29px;
  margin-top: -3px;
  margin-bottom: 3px;
}

.check input {
  appearance: none;
  display: grid;
  width: 13px;
  height: 13px;
  margin: 0 7px 0 0;
  border: 1px solid #333;
  background: #fff;
}

.check input:checked::before {
  content: "";
  width: 9px;
  height: 5px;
  margin: 2px 1px;
  border: solid #333;
  border-width: 0 0 1px 1px;
  transform: rotate(-45deg);
}

.clipped {
  flex: none;
  height: 8px;
  margin-top: 1px;
  overflow: hidden;
}

.expand {
  height: 12px;
  border: 1px solid #ccc;
}

/* status bar */

.status {
  display: flex;
  flex: none;
  align-items: center;
  height: 31px;
  padding-bottom: 2px;
  border-top: 1px solid #bbb;
}

.status__cell {
  flex: none;
  height: 21px;
  padding-left: 5px;
  border-left: 1px solid #bbb;
}

.status__cell--empty {
  width: 154px;
  border: 0;
}

.status__cell--line {
  width: 106px;
}

.status__cell--area {
  width: 93px;
}

.status__cell--page {
  width: 125px;
}

.status__cell--lang {
  width: 113px;
}

.status__cell--words {
  flex: 1;
}

.status__cell--mode {
  width: 57px;
  padding-left: 11px;
}

.zoom {
  width: 111px;
  height: 15px;
  margin: 0 0 0 -2px;
  appearance: none;
  background: linear-gradient(#d0d0d0, #d0d0d0) center / 100% 1px no-repeat;
}

.zoom::-webkit-slider-thumb {
  appearance: none;
  width: 11px;
  height: 11px;
  border: 1px solid #777;
  border-radius: 50%;
  background: #fff;
}

.tool--plus {
  width: 19px;
}

.status__zoom {
  width: 50px;
  padding-left: 9px;
}

.status .more {
  width: 17px;
  margin: 0 10px 0 2px;
}

/* red highlight frames, they lie over the window */

.frame {
  position: absolute;
  border: 13px solid #ff4242;
  filter: drop-shadow(1px 3px 2px rgba(0, 0, 0, .6));
  pointer-events: none;
}

.frame--style {
  top: 76px;
  left: 17px;
  width: 216px;
  height: 62px;
}

.frame--heading {
  top: 321px;
  left: 324px;
  width: 330px;
  height: 142px;
}

.frame--styles {
  top: 198px;
  right: -1px;
  width: 249px;
  height: 119px;
}
```
